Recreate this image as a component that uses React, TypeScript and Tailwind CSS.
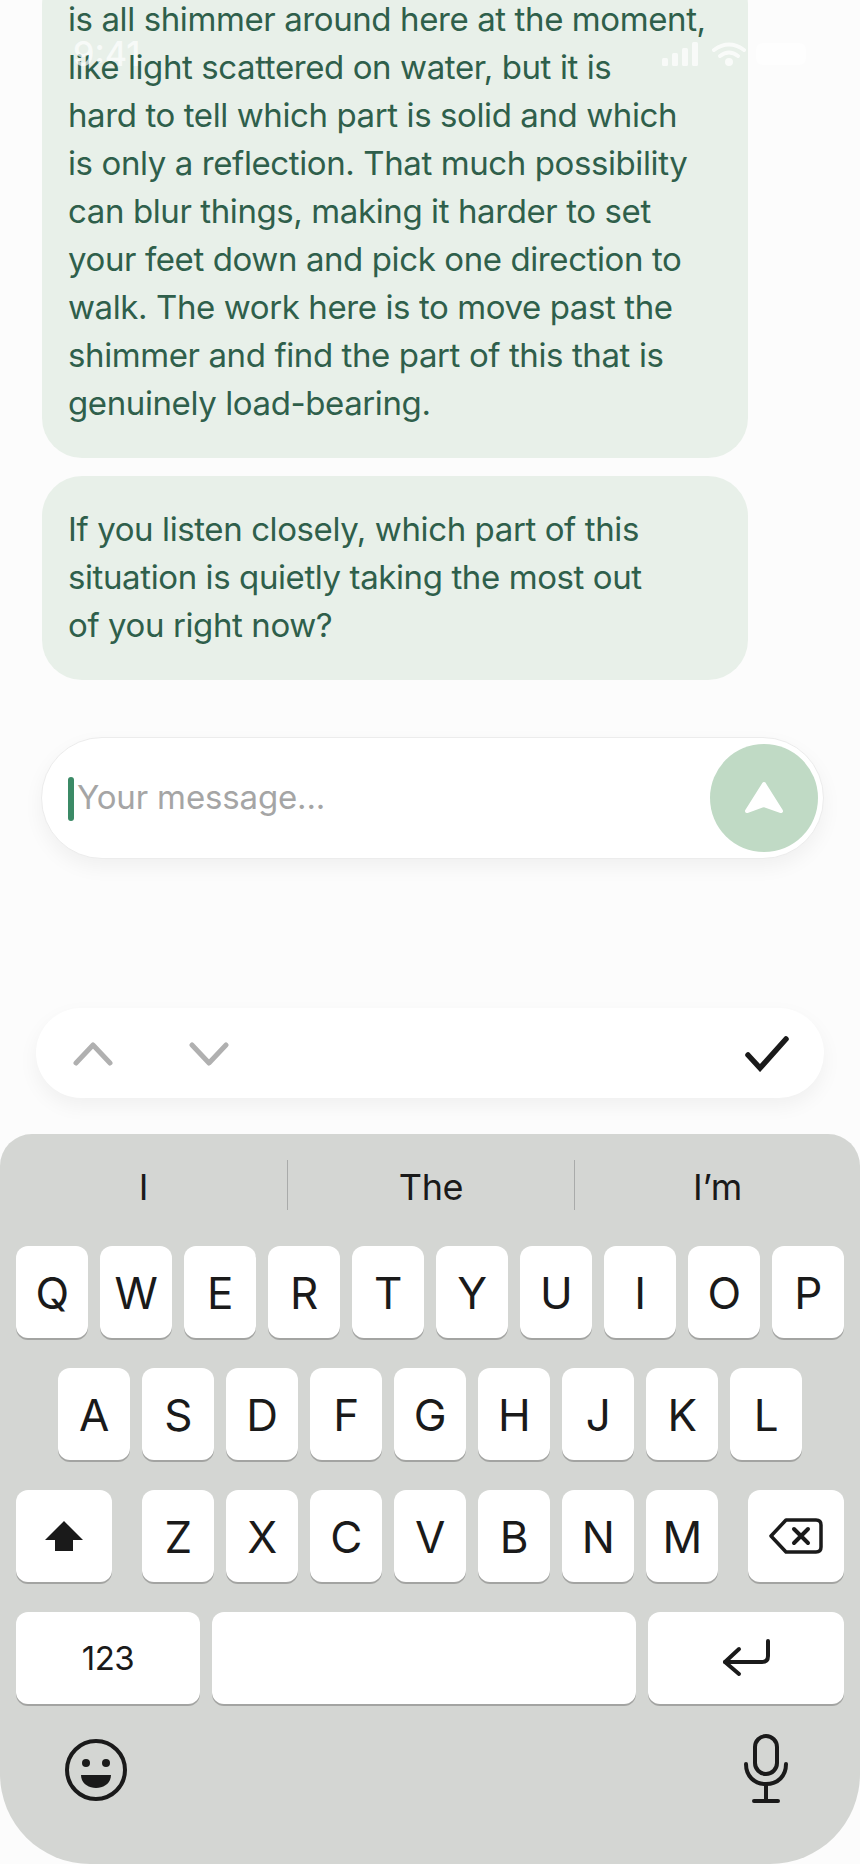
const Key = ({ c }: { c: string }) => (
  <div className="w-[72px] h-[92px] shrink-0 rounded-[12px] bg-white shadow-[0_2px_0_#a3a4a2] flex items-center justify-center pt-[1px] text-[44px] tracking-[-0.5px] text-[#1a1a1a]">
    {c}
  </div>
);

const Wide = ({ w, children }: { w: string; children?: React.ReactNode }) => (
  <div className={`${w} h-[92px] shrink-0 rounded-[12px] bg-white shadow-[0_2px_0_#a3a4a2] flex items-center justify-center text-[#1a1a1a]`}>
    {children}
  </div>
);

const Line = ({ children }: { children: string }) => <div className="whitespace-nowrap">{children}</div>;

export default function App() {
  return (
    <div className="relative w-[860px] h-[1864px] overflow-hidden bg-[#fcfcfc] font-['Inter',sans-serif] flex flex-col">
      <div className="absolute top-[36px] left-[73px] right-[54px] flex items-center justify-between text-white/70 text-[34px] leading-[36px] font-medium z-10">
        <span>9:41</span>
        <div className="flex items-center">
          <svg width="36" height="24" viewBox="0 0 36 24" fill="#ffffff" opacity="0.7">
            <rect x="0" y="16" width="6" height="8" rx="1.5" />
            <rect x="10" y="11" width="6" height="13" rx="1.5" />
            <rect x="20" y="6" width="6" height="18" rx="1.5" />
            <rect x="30" y="0" width="6" height="24" rx="1.5" />
          </svg>
          <svg className="ml-[14px]" width="34" height="24" viewBox="0 0 34 24" fill="none" stroke="#ffffff" strokeWidth="4" opacity="0.75" strokeLinecap="round">
            <path d="M2 8 Q17 -3 32 8" />
            <path d="M8 14 Q17 7 26 14" />
            <circle cx="17" cy="20" r="2" fill="#ffffff" />
          </svg>
          <div className="ml-[10px] w-[50px] h-[22px] rounded-[6px] bg-white/50" />
        </div>
      </div>

      <div className="mt-[-35px] ml-[42px] w-[706px] rounded-[40px] bg-[#e8f0e9] pl-[26px] pt-[30px] pb-[31px] text-[33px] leading-[48px] tracking-[-0.4px] text-[#2f5f4b]">
        <Line>is all shimmer around here at the moment,</Line>
        <Line>like light scattered on water, but it is</Line>
        <Line>hard to tell which part is solid and which</Line>
        <Line>is only a reflection. That much possibility</Line>
        <Line>can blur things, making it harder to set</Line>
        <Line>your feet down and pick one direction to</Line>
        <Line>walk. The work here is to move past the</Line>
        <Line>shimmer and find the part of this that is</Line>
        <Line>genuinely load-bearing.</Line>
      </div>

      <div className="mt-[18px] ml-[42px] w-[706px] rounded-[40px] bg-[#e8f0e9] pl-[26px] pt-[29px] pb-[31px] text-[33px] leading-[48px] tracking-[-0.4px] text-[#2f5f4b]">
        <Line>If you listen closely, which part of this</Line>
        <Line>situation is quietly taking the most out</Line>
        <Line>of you right now?</Line>
      </div>

      <div className="mt-[57px] ml-[41px] w-[783px] h-[122px] rounded-full bg-white border border-[#ececec] shadow-[0_8px_20px_rgba(0,0,0,0.05)] flex items-center pl-[26px] pr-[5px]">
        <div className="w-[6px] h-[44px] mt-[2px] rounded-[3px] bg-[#3b8a66]" />
        <span className="ml-[3px] flex-1 text-[33px] tracking-[-0.15px] text-[#a5a5a5]">Your message...</span>
        <div className="w-[108px] h-[108px] rounded-full bg-[#c0dac5] flex items-center justify-center">
          <svg width="40" height="34" viewBox="0 0 40 34" fill="#ffffff" stroke="#ffffff" strokeWidth="4" strokeLinejoin="round">
            <path d="M20 3 L37 30 L20 24 L3 30 Z" />
          </svg>
        </div>
      </div>

      <div className="mt-[149px] ml-[36px] w-[788px] h-[90px] rounded-full bg-white shadow-[0_8px_20px_rgba(0,0,0,0.05)] flex items-center pt-[2px] pl-[37px] pr-[35px]">
        <svg width="40" height="24" viewBox="0 0 40 24" fill="none" stroke="#b0b0b0" strokeWidth="5" strokeLinecap="round" strokeLinejoin="round">
          <path d="M3 21 L20 3 L37 21" />
        </svg>
        <svg className="ml-[76px]" width="40" height="24" viewBox="0 0 40 24" fill="none" stroke="#b0b0b0" strokeWidth="5" strokeLinecap="round" strokeLinejoin="round">
          <path d="M3 3 L20 21 L37 3" />
        </svg>
        <svg className="ml-auto" width="44" height="36" viewBox="0 0 44 36" fill="none" stroke="#1a1a1a" strokeWidth="5.5" strokeLinecap="round" strokeLinejoin="miter">
          <path d="M3 19 L15 32 L41 3" />
        </svg>
      </div>

      <div className="mt-[36px] flex-1 bg-[#d4d6d3] rounded-t-[32px] rounded-b-[90px] px-[16px]">
        <div className="h-[112px] -mx-[16px] flex items-start pt-[26px] text-[36px] leading-[50px] tracking-[-0.3px] text-[#1a1a1a]">
          <div className="w-[287px] h-[50px] flex items-center justify-center pt-[4px]">I</div>
          <div className="w-[288px] h-[50px] flex items-center justify-center pt-[4px] border-x border-[#a9abaa]">The</div>
          <div className="w-[285px] h-[50px] flex items-center justify-center pt-[4px]">I’m</div>
        </div>

        <div className="flex gap-[12px]">
          {"QWERTYUIOP".split("").map((c) => <Key key={c} c={c} />)}
        </div>
        <div className="flex gap-[12px] mt-[30px] pl-[42px]">
          {"ASDFGHJKL".split("").map((c) => <Key key={c} c={c} />)}
        </div>
        <div className="flex mt-[30px]">
          <Wide w="w-[96px]">
            <svg width="38" height="30" viewBox="0 0 38 30" fill="#1a1a1a">
              <path d="M19 0 L38 19 L28 19 L28 30 L10 30 L10 19 L0 19 Z" />
            </svg>
          </Wide>
          <div className="flex gap-[12px] ml-[30px]">
            {"ZXCVBNM".split("").map((c) => <Key key={c} c={c} />)}
          </div>
          <div className="ml-[30px]">
            <Wide w="w-[96px]">
              <svg width="54" height="36" viewBox="0 0 54 36" fill="none" stroke="#1a1a1a" strokeWidth="3.5" strokeLinecap="round" strokeLinejoin="round">
                <path d="M17 2 H47 Q52 2 52 7 V29 Q52 34 47 34 H17 L2 18 Z" />
                <path d="M25 11 L39 25 M39 11 L25 25" strokeWidth="4" />
              </svg>
            </Wide>
          </div>
        </div>
        <div className="flex gap-[12px] mt-[30px]">
          <Wide w="w-[184px]"><span className="text-[33px] tracking-[-0.5px] pt-[2px]">123</span></Wide>
          <Wide w="w-[424px]" />
          <Wide w="w-[196px]">
            <svg width="48" height="38" viewBox="0 0 48 38" fill="none" stroke="#1a1a1a" strokeWidth="4" strokeLinecap="round" strokeLinejoin="round">
              <path d="M46 2 V17 Q46 23 40 23 H3" />
              <path d="M17 10 L3 23 L17 35" />
            </svg>
          </Wide>
        </div>

        <div className="flex items-start justify-between mt-[35px] pl-[49px] pr-[56px]">
          <svg width="62" height="62" viewBox="0 0 62 62" fill="none">
            <circle cx="31" cy="31" r="29" stroke="#1a1a1a" strokeWidth="4" />
            <circle cx="21" cy="24" r="4" fill="#1a1a1a" />
            <circle cx="41" cy="24" r="4" fill="#1a1a1a" />
            <path d="M16 36 H46 C46 44 39 49 31 49 C23 49 16 44 16 36 Z" fill="#1a1a1a" />
          </svg>
          <svg className="mt-[-5px]" width="44" height="70" viewBox="0 0 44 70" fill="none" stroke="#1a1a1a" strokeWidth="4" strokeLinecap="round">
            <rect x="11" y="2" width="22" height="38" rx="11" />
            <path d="M2 30 C2 42 10 50 22 50 C34 50 42 42 42 30" />
            <path d="M22 50 V67 M10 67 H34" />
          </svg>
        </div>
      </div>
    </div>
  );
}
